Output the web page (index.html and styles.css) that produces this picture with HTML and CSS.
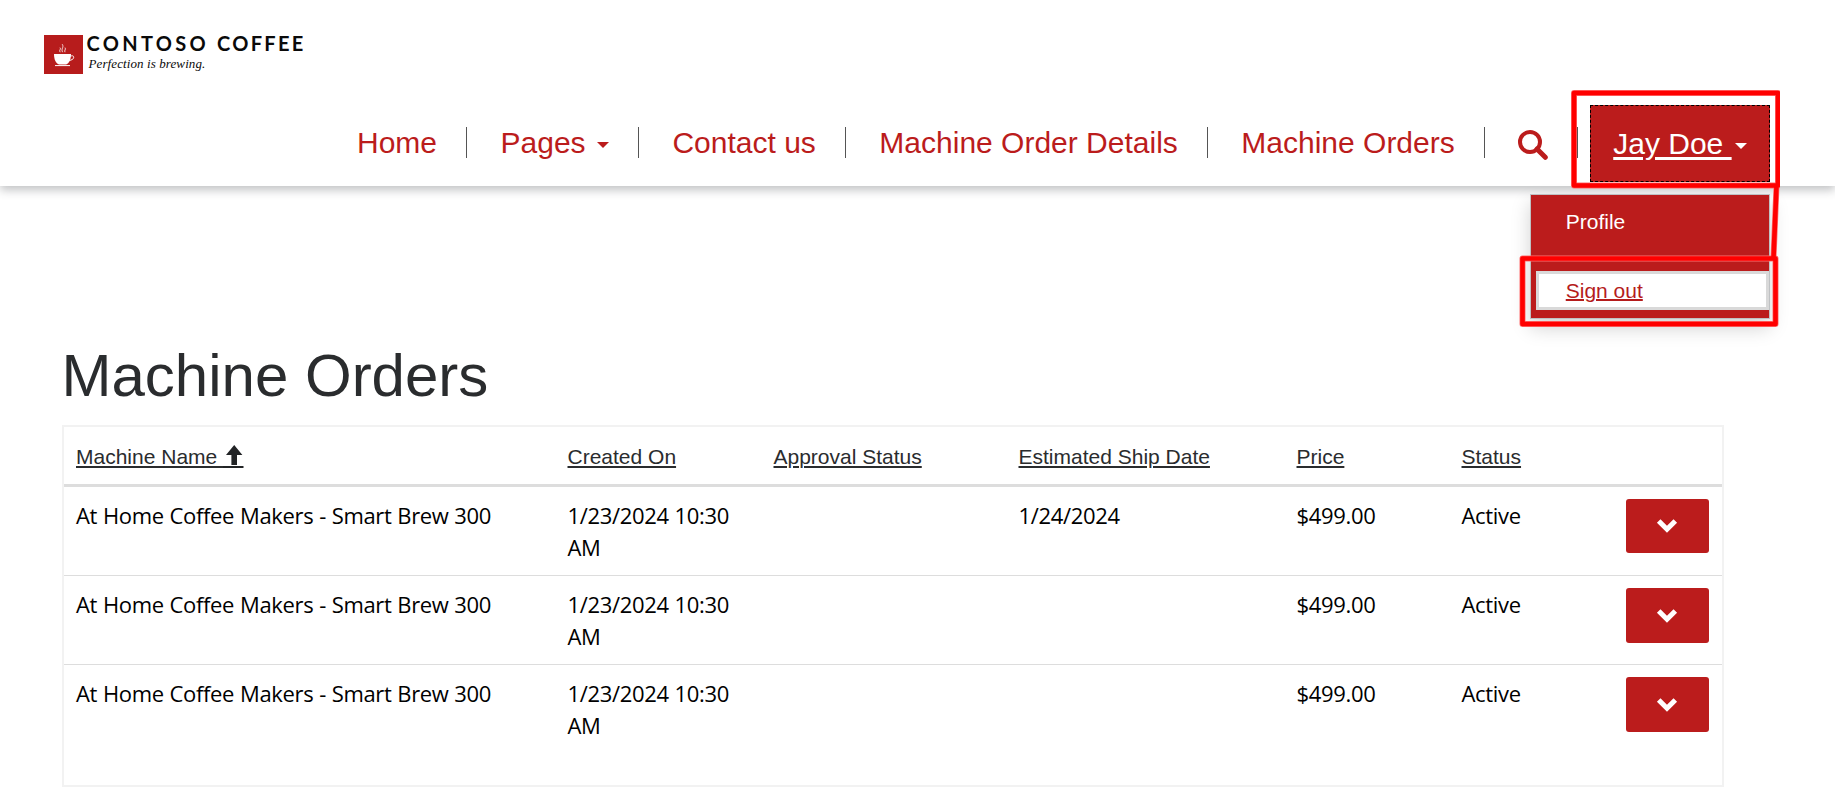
FILE: index.html
```html
<!DOCTYPE html>
<html lang="en">
<head>
<meta charset="utf-8">
<title>Machine Orders - Contoso Coffee</title>
<link rel="stylesheet" href="styles.css">
</head>
<body>
<header class="header">
  <a class="brand">
    <svg class="brand-mark" viewBox="0 0 39 39">
      <rect width="39" height="39" fill="#b71c1c"/>
      <path d="M10 19H27C27 25 25 28.3 22 29.6H15C12 28.3 10 25 10 19Z" fill="#fff"/>
      <path d="M26.5 21.2C30 19.6 30.6 23 28.4 24.4C27.4 25.2 26 25.4 25.3 25.5" fill="none" stroke="#fff" stroke-width="1"/>
      <path d="M11 30.6H26" stroke="#fff" stroke-width="1"/>
      <path d="M16.2 17.2C14.4 15.2 17.6 14.4 16 12.6M18.6 17.2C16.6 13.8 20.4 12.4 18.2 9.2M21 17.2C19.8 15.4 22.4 14.6 21 12.6" fill="none" stroke="#fff" stroke-width=".8"/>
    </svg>
    <span class="brand-text">
      <span class="brand-name">CONTOSO <span class="brand-name-end">COFFEE</span></span>
      <span class="brand-tag">Perfection is brewing.</span>
    </span>
  </a>
  <nav class="nav">
    <a class="nav-item">Home</a>
    <a class="nav-item">Pages <i class="caret"></i></a>
    <a class="nav-item">Contact us</a>
    <a class="nav-item">Machine Order Details</a>
    <a class="nav-item">Machine Orders</a>
    <a class="nav-item">
      <svg class="search" viewBox="0 0 30 30"><circle cx="12" cy="12" r="10"/><path d="M19 19L27.3 27.3"/></svg>
    </a>
    <div class="user">
      <a class="user-toggle"><span class="user-name">Jay Doe </span><i class="caret"></i></a>
      <div class="menu">
        <a class="menu-item">Profile</a>
        <a class="menu-item menu-item-active">Sign out</a>
      </div>
      <svg class="marks" viewBox="0 0 270 250">
        <g class="marks-halo"><path d="M64 13H268V105.500H64ZM266.500 106L263.500 178M12.500 178.500H265.500V244H12.500Z"/></g>
        <g class="marks-line"><path d="M64 13H268V105.500H64ZM266.500 106L263.500 178M12.500 178.500H265.500V244H12.500Z"/></g>
      </svg>
    </div>
  </nav>
</header>
<main class="main">
  <h1 class="title">Machine Orders</h1>
  <div class="grid">
    <table class="orders">
      <colgroup><col class="c-name"><col class="c-created"><col class="c-approval"><col class="c-ship"><col class="c-price"><col class="c-status"><col></colgroup>
      <thead>
        <tr>
          <th><a>Machine Name <svg class="sort" viewBox="0 0 21 23"><path d="M11.200 0L19.400 10H14V20H8.400V10H3ZM0 21H20.500V23H0Z"/></svg></a></th>
          <th><a>Created On</a></th><th><a>Approval Status</a></th><th><a>Estimated Ship Date</a></th><th><a>Price</a></th><th><a>Status</a></th><th></th>
        </tr>
      </thead>
      <tbody>
        <tr><td>At Home Coffee Makers - Smart Brew 300</td><td>1/23/2024 10:30 AM</td><td></td><td>1/24/2024</td><td>$499.00</td><td>Active</td>
          <td><button class="action"><svg viewBox="0 0 20 14"><path d="M1.700 2L10 10.300L18.300 2"/></svg></button></td></tr>
        <tr><td>At Home Coffee Makers - Smart Brew 300</td><td>1/23/2024 10:30 AM</td><td></td><td></td><td>$499.00</td><td>Active</td>
          <td><button class="action action-tall"><svg viewBox="0 0 20 14"><path d="M1.700 2L10 10.300L18.300 2"/></svg></button></td></tr>
        <tr><td>At Home Coffee Makers - Smart Brew 300</td><td>1/23/2024 10:30 AM</td><td></td><td></td><td>$499.00</td><td>Active</td>
          <td><button class="action action-tall"><svg viewBox="0 0 20 14"><path d="M1.700 2L10 10.300L18.300 2"/></svg></button></td></tr>
      </tbody>
    </table>
  </div>
</main>
</body>
</html>
```
FILE: styles.css
```css
* { box-sizing: border-box; }
body {
  margin: 0;
  height: 800px;
  overflow: hidden;
  background: #fff;
  font-family: "Liberation Sans", Arial, sans-serif;
}
.header {
  position: relative;
  height: 186px;
  padding-top: 34px;
  background: #fff;
  box-shadow: 0 4px 9px rgba(50, 54, 60, .3);
}
.brand { display: flex; height: 71px; padding-left: 44px; }
.brand-mark { width: 39px; height: 39px; margin-top: .5px; }
.brand-text { display: flex; flex-direction: column; padding-left: 3.5px; color: #0a0a0a; white-space: nowrap; }
.brand-name {
  margin-top: -1px;
  font: 700 20px/20px Lato, sans-serif;
  letter-spacing: 3.3px;
}
.brand-name-end { letter-spacing: 2.3px; }
.brand-tag {
  margin-top: 2px;
  padding-left: 2px;
  font: italic 13px/18px "Liberation Serif", serif;
  letter-spacing: .1px;
}
.nav { display: flex; align-items: flex-start; height: 77px; padding-left: 323.5px; }
.nav-item {
  display: flex;
  align-items: center;
  height: 31px;
  margin-top: 22px;
  padding: 0 29px 0 33.5px;
  border-right: 1px solid #555;
  color: #bb1c1c;
  font-size: 30px;
  line-height: 29px;
  white-space: pre;
}
.caret {
  width: 12px;
  margin: 5px 0 0 3px;
  border: 6px solid transparent;
  border-top-color: currentColor;
  border-bottom: 0;
}
.search {
  width: 30px;
  height: 30px;
  margin-top: 5px;
  fill: none;
  stroke: #bb1c1c;
  stroke-width: 4;
}
.search path { stroke-width: 5; stroke-linecap: round; }
.user { position: relative; margin-left: 12px; }
.user-toggle {
  display: flex;
  align-items: center;
  width: 180px;
  height: 77px;
  padding-left: 22px;
  border: 1px dashed #000;
  background: #bb1c1c;
  color: #fff;
  font-size: 30px;
}
.user-name {
  white-space: pre;
  text-decoration: underline;
  text-decoration-thickness: 3px;
  text-underline-offset: 3px;
}
.menu {
  position: absolute;
  top: 89px;
  right: 0;
  width: 240px;
  height: 125px;
  padding: 7px 0 8px 5px;
  border: 1px solid #bfc1c3;
  background: #bb1c1c;
  box-shadow: 0 9px 18px rgba(0, 0, 0, .175);
}
.menu-item {
  display: block;
  height: 39px;
  padding-left: 26.5px;
  border: 3px solid transparent;
  color: #fff;
  font-size: 21px;
  line-height: 33px;
}
.menu-item-active {
  margin-top: 30px;
  border-color: #d9d9d9;
  background: #fff;
  color: #b51c1c;
  text-decoration: underline;
  text-decoration-thickness: 2px;
}
.marks { position: absolute; top: -25px; left: -80px; width: 270px; height: 250px; fill: none; stroke-linejoin: round; }
.marks-halo { stroke: #ff7070; stroke-width: 6; }
.marks-line { stroke: #f00; stroke-width: 4.6; }
.main { padding: 154px 0 0 61.5px; }
.title {
  margin: 0;
  height: 85px;
  color: #2a2c2e;
  font-size: 60px;
  font-weight: 400;
  line-height: 71px;
}
.grid { width: 1662px; height: 362px; margin-left: .5px; border: 2px solid #f2f2f2; }
.orders { width: 1658px; table-layout: fixed; border-collapse: separate; border-spacing: 0; }
.c-name { width: 491.5px; }
.c-created { width: 206px; }
.c-approval { width: 245px; }
.c-ship { width: 278px; }
.c-price { width: 165px; }
.c-status { width: 164.5px; }
th {
  height: 60px;
  padding: 2px 12px 0;
  border-bottom: 3px solid #ddd;
  color: #2a2c2e;
  font-size: 21px;
  font-weight: 400;
  line-height: 24px;
  text-align: left;
  white-space: nowrap;
}
th a { text-decoration: underline; text-decoration-thickness: 2px; text-underline-offset: 2px; }
.sort { width: 21px; height: 23px; margin: -4px 0; vertical-align: baseline; fill: #222426; }
td {
  height: 89px;
  padding: 12px 12px 0;
  border-bottom: 1px solid #ddd;
  color: #000;
  font: 22px/32px "Open Sans", sans-serif;
  letter-spacing: -.33px;
  word-spacing: .4px;
  vertical-align: top;
}
tr:last-child td { border-bottom: 0; }
.action {
  display: flex;
  align-items: center;
  justify-content: center;
  width: 83px;
  height: 54px;
  padding: 0 1px 0 0;
  border: 0;
  border-radius: 3px;
  background: #bb1c1c;
}
.action-tall { height: 55px; }
.action svg { width: 20px; height: 14px; fill: none; stroke: #fff; stroke-width: 5; overflow: visible; }
```
